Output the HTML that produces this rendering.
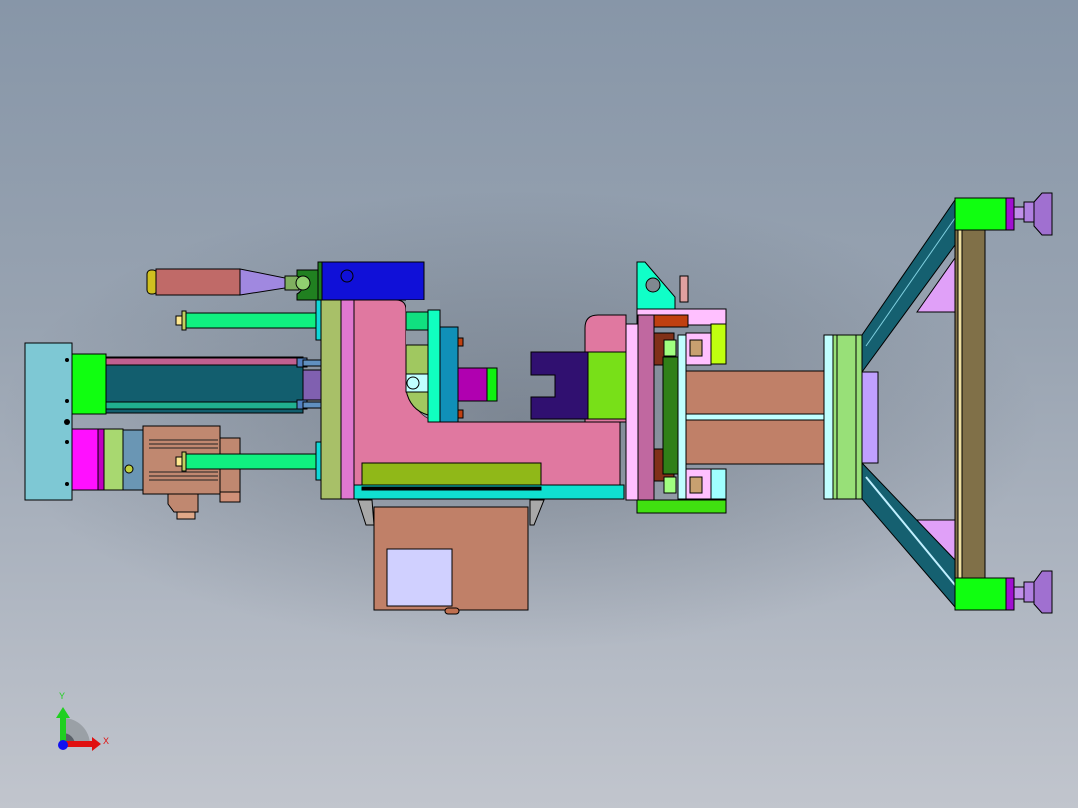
<!DOCTYPE html>
<html><head><meta charset="utf-8"><style>
html,body{margin:0;padding:0;width:1078px;height:808px;overflow:hidden}
body{background:radial-gradient(ellipse 60% 55% at 50% 52%,#a9b2bd 0%,#9aa5b2 50%,#8d9aab 100%),#8d9aab}
.bg{position:absolute;inset:0;background:linear-gradient(#8796a8 0%,#98a3b1 40%,#b0b7c2 75%,#c1c5cd 100%);}
svg{position:absolute;left:0;top:0}
</style></head><body><div class="bg"></div>
<svg width="1078" height="808" viewBox="0 0 1078 808" stroke="#000" stroke-width="1">
<defs>
<radialGradient id="sh" cx="0.5" cy="0.5" r="0.5"><stop offset="0" stop-color="#3a4450" stop-opacity="0.35"/><stop offset="1" stop-color="#3a4450" stop-opacity="0"/></radialGradient>
</defs>
<ellipse cx="520" cy="420" rx="520" ry="230" fill="url(#sh)" stroke="none"/>
<!-- left block -->
<rect x="25" y="343" width="47" height="157" fill="#7ec8d4"/>
<g fill="#000" stroke="none"><circle cx="67" cy="360" r="2"/><circle cx="67" cy="401" r="2"/><circle cx="67" cy="422" r="3"/><circle cx="67" cy="442" r="2"/><circle cx="67" cy="484" r="2"/></g>
<rect x="72" y="354" width="34" height="60" fill="#10ff10"/>
<rect x="106" y="357" width="197" height="56" fill="#125e6e"/>
<rect x="106" y="358" width="197" height="7" fill="#c06090"/>
<rect x="106" y="402" width="197" height="7" fill="#20b090"/>
<rect x="297" y="358" width="10" height="9" fill="#5080c0"/><rect x="297" y="400" width="10" height="9" fill="#5080c0"/>
<rect x="303" y="370" width="18" height="30" fill="#8060b0"/>
<rect x="303" y="360" width="18" height="6" fill="#6090c0"/><rect x="303" y="402" width="18" height="6" fill="#6090c0"/>
<!-- motor -->
<rect x="72" y="429" width="30" height="61" fill="#ff10ff"/>
<rect x="98" y="429" width="6" height="61" fill="#c000c0"/>
<rect x="104" y="429" width="19" height="61" fill="#a8d870"/>
<rect x="123" y="430" width="20" height="60" fill="#6a96b4"/>
<circle cx="129" cy="469" r="4" fill="#c0d040"/>
<rect x="143" y="426" width="77" height="68" fill="#c08870"/>
<g stroke="#222"><line x1="149" y1="440" x2="218" y2="440"/><line x1="149" y1="444" x2="218" y2="444"/><line x1="149" y1="448" x2="218" y2="448"/><line x1="149" y1="472" x2="218" y2="472"/><line x1="149" y1="476" x2="218" y2="476"/><line x1="149" y1="480" x2="218" y2="480"/></g>
<rect x="220" y="438" width="20" height="54" fill="#c08870"/>
<rect x="220" y="492" width="20" height="10" fill="#d09078"/>
<path d="M168 494h30v18h-24l-6-8z" fill="#c08870"/>
<rect x="177" y="512" width="18" height="7" fill="#e0a888"/>
<!-- rods -->
<rect x="185" y="313" width="136" height="15" fill="#10f080"/>
<rect x="176" y="316" width="10" height="9" fill="#ffe890"/><rect x="182" y="311" width="4" height="19" fill="#c0d060"/>
<rect x="185" y="454" width="136" height="15" fill="#10f080"/>
<rect x="176" y="457" width="10" height="9" fill="#ffe890"/><rect x="182" y="452" width="4" height="19" fill="#c0d060"/>
<!-- handle -->
<rect x="147" y="270" width="10" height="24" rx="4" fill="#d0c020"/>
<rect x="156" y="269" width="84" height="26" fill="#c06a68"/>
<path d="M240 269 L285 278 L285 288 L240 295z" fill="#a088e0"/>
<rect x="285" y="276" width="14" height="14" fill="#80b060"/>
<path d="M297 270h21v30h-21v-6a10 10 0 0 0 0-18z" fill="#208020"/>
<circle cx="303" cy="283" r="7" fill="#90d070"/>
<rect x="318" y="262" width="5" height="38" fill="#208020"/>
<rect x="322" y="262" width="102" height="38" fill="#1010d8"/>
<circle cx="347" cy="276" r="6" fill="none"/>
<!-- plates -->
<rect x="316" y="300" width="6" height="40" fill="#10d8d8"/>
<rect x="316" y="442" width="6" height="38" fill="#10d8d8"/>
<rect x="321" y="300" width="20" height="199" fill="#a8c068"/>
<rect x="341" y="300" width="13" height="199" fill="#e078d0"/>
<!-- pink body -->
<path d="M354 300 H396 Q406 300 406 310 V372 Q410 418 440 422 H620 V499 H354 Z" fill="#e078a0"/>
<path d="M406 300 H440 V422 Q410 418 406 372 Z" fill="#8f9aa6" stroke="none"/>
<rect x="406" y="312" width="24" height="18" fill="#10e080"/>
<path d="M406 345 H428 V415 Q410 410 406 390 Z" fill="#a0c860"/>
<rect x="406" y="374" width="24" height="18" fill="#c0ffff"/><circle cx="413" cy="383" r="6" fill="none"/>
<rect x="428" y="310" width="12" height="112" fill="#10ffc0"/>
<rect x="440" y="327" width="18" height="95" fill="#1090b8"/>
<g fill="#c04010"><rect x="458" y="338" width="5" height="8"/><rect x="458" y="374" width="5" height="8"/><rect x="458" y="410" width="5" height="8"/></g>
<rect x="458" y="368" width="30" height="33" fill="#b000b0"/>
<rect x="487" y="368" width="10" height="33" fill="#10f010"/>
<rect x="362" y="463" width="179" height="27" fill="#90b818"/>
<rect x="354" y="485" width="270" height="14" fill="#10e0d0"/>
<rect x="362" y="487" width="179" height="3" fill="#000"/>
<!-- right pink box -->
<path d="M598 315 H626 V422 H585 V328 Q585 315 598 315Z" fill="#e078a0"/>
<path d="M531 352 H588 V419 H531 V397 H555 V375 H531Z" fill="#301070"/>
<rect x="588" y="352" width="50" height="67" fill="#78e018"/>
<!-- under box -->
<path d="M358 500 h14 l2 25 h-8z" fill="#a8a8a8"/>
<path d="M530 500 h14 l-10 25 h-4z" fill="#a8a8a8"/>
<rect x="374" y="507" width="154" height="103" fill="#c08068"/>
<rect x="387" y="549" width="65" height="57" fill="#d0d0ff"/>
<rect x="445" y="608" width="14" height="6" rx="3" fill="#c07050"/>
<!-- right assembly -->
<path d="M637 262 h8 l30 35 v12 h-38z" fill="#10ffc8"/><circle cx="653" cy="285" r="7" fill="#808890"/>
<rect x="680" y="276" width="8" height="26" fill="#e0a0a0"/>
<rect x="637" y="309" width="89" height="16" fill="#ffc0ff"/>
<rect x="626" y="324" width="22" height="176" fill="#ffc0ff"/>
<rect x="638" y="315" width="16" height="185" fill="#c068a0"/>
<rect x="654" y="315" width="34" height="12" fill="#c04010"/>
<rect x="654" y="333" width="20" height="32" fill="#803018"/><rect x="654" y="449" width="20" height="32" fill="#803018"/>
<rect x="663" y="357" width="15" height="117" fill="#308018"/>
<rect x="678" y="335" width="8" height="164" fill="#c0ffff"/>
<rect x="686" y="333" width="25" height="32" fill="#ffc0ff"/><rect x="686" y="469" width="25" height="30" fill="#ffc0ff"/>
<rect x="690" y="340" width="12" height="16" fill="#c8a070"/><rect x="690" y="477" width="12" height="16" fill="#c8a070"/>
<rect x="664" y="340" width="12" height="16" fill="#a0ff80"/><rect x="664" y="477" width="12" height="16" fill="#a0ff80"/>
<rect x="711" y="324" width="15" height="40" fill="#c0ff10"/>
<rect x="711" y="469" width="15" height="30" fill="#a0ffff"/>
<rect x="637" y="500" width="89" height="13" fill="#40e010"/>
<rect x="686" y="371" width="138" height="43" fill="#c08068"/>
<rect x="686" y="414" width="138" height="6" fill="#c0ffff"/>
<rect x="686" y="420" width="138" height="44" fill="#c08068"/>
<rect x="824" y="335" width="9" height="164" fill="#c0ffff"/>
<rect x="833" y="335" width="29" height="164" fill="#98e078"/>
<line x1="837" y1="335" x2="837" y2="499"/><line x1="856" y1="335" x2="856" y2="499"/>
<!-- frame -->
<path d="M862 372 L878 372 L878 463 L862 463Z" fill="#c0a0ff"/>
<path d="M917 312 L955 258 L955 312Z" fill="#e0a0f8"/>
<path d="M917 520 L955 520 L955 575Z" fill="#e0a0f8"/>
<path d="M862 335 L955 200 L955 245 L862 372Z" fill="#156070"/>
<path d="M862 463 L955 560 L955 607 L862 499Z" fill="#156070"/>
<line x1="866" y1="346" x2="955" y2="218" stroke="#80d0e0"/>
<line x1="866" y1="477" x2="955" y2="585" stroke="#c0f0ff" stroke-width="2"/>
<rect x="955" y="230" width="30" height="348" fill="#807048"/>
<rect x="958" y="230" width="4" height="348" fill="#f0e0a0"/>
<rect x="955" y="198" width="51" height="32" fill="#10ff10"/>
<rect x="955" y="578" width="51" height="32" fill="#10ff10"/>
<rect x="1006" y="198" width="8" height="32" fill="#a010d0"/>
<rect x="1006" y="578" width="8" height="32" fill="#a010d0"/>
<rect x="1014" y="207" width="20" height="12" fill="#c090e8"/>
<rect x="1014" y="587" width="20" height="12" fill="#c090e8"/>
<rect x="1024" y="202" width="10" height="20" fill="#b080e0"/>
<rect x="1024" y="582" width="10" height="20" fill="#b080e0"/>
<path d="M1034 202 L1042 193 H1052 V235 H1042 L1034 226Z" fill="#a070d0"/>
<path d="M1034 582 L1042 571 H1052 V613 H1042 L1034 604Z" fill="#a070d0"/>
<!-- axes -->
<path d="M63 745 V718 A27 27 0 0 1 90 745Z" fill="#9aa0a6" stroke="none"/>
<path d="M63 745 V733 A12 12 0 0 1 75 745Z" fill="#5a6068" stroke="none"/>
<rect x="60" y="716" width="6" height="28" fill="#20d020" stroke="none"/>
<path d="M56 718 L63 707 L70 718Z" fill="#20d020" stroke="none"/>
<rect x="63" y="741" width="30" height="6" fill="#e01010" stroke="none"/>
<path d="M92 737 L101 744 L92 751Z" fill="#e01010" stroke="none"/>
<circle cx="63" cy="745" r="5" fill="#1010f0" stroke="none"/>
<text x="59" y="699" font-family="Liberation Sans,sans-serif" font-size="9" fill="#20d020" stroke="none">Y</text>
<text x="103" y="744" font-family="Liberation Sans,sans-serif" font-size="9" fill="#e01010" stroke="none">X</text>
</svg>
</body></html>
